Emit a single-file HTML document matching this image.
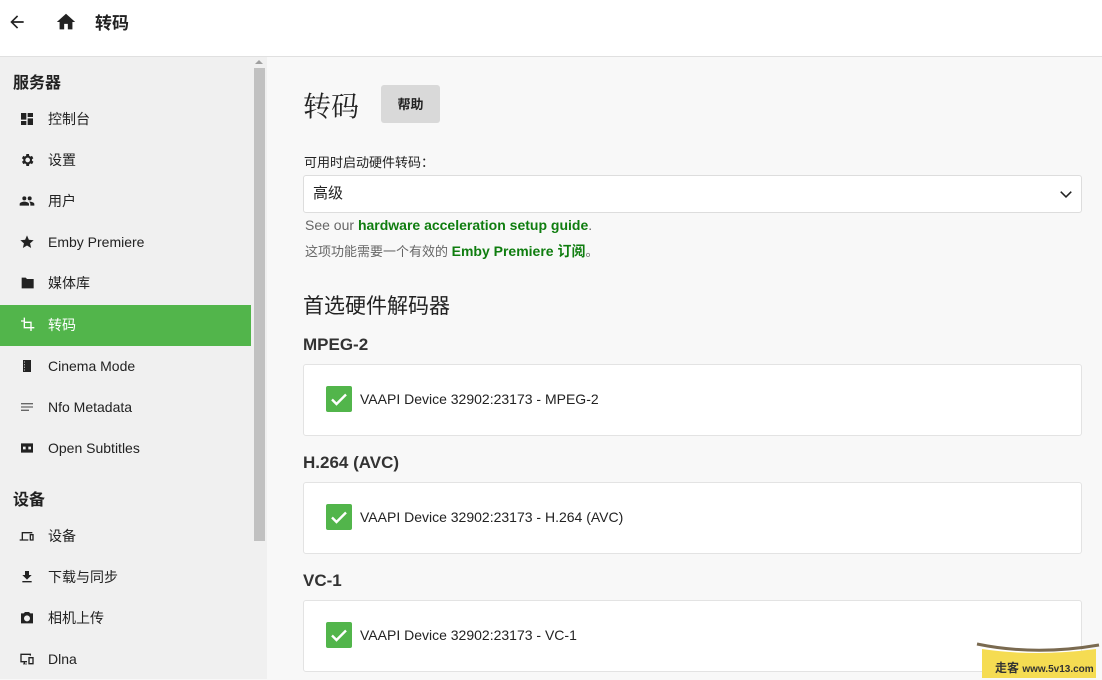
<!DOCTYPE html>
<html><head><meta charset="utf-8"><style>
*{margin:0;padding:0;box-sizing:border-box}
body{width:1102px;height:679px;overflow:hidden;background:#f8f8f8;font-family:"Liberation Sans","Noto Sans CJK SC",sans-serif;color:#222;position:relative}
.hdr{position:absolute;left:0;top:0;width:1102px;height:57px;background:#fff;border-bottom:1px solid #e0e0e0}
.side{position:absolute;left:0;top:57px;width:251px;height:622px;background:#f0f0f0}
.sb{position:absolute;left:251px;top:57px;width:16px;height:622px;background:#f0f0f0}
.thumb{position:absolute;left:254px;top:68px;width:11px;height:473px;background:#c1c1c1}
.sec{position:absolute;left:13px;font-size:16px;font-weight:bold;color:#222}
.it{position:absolute;left:0;width:251px;height:41px;font-size:14px;color:#222;line-height:41px}
.it .ic{position:absolute;left:19px;top:12px;width:16px;height:16px}
.it .t{position:absolute;left:48px}
.sel{background:#52b54b;color:#fff}
.abs{position:absolute}
.card{position:absolute;left:303px;width:779px;height:72px;background:#fff;border:1px solid #e3e3e3;border-radius:3px}
.cb{position:absolute;left:22px;top:21px;width:26px;height:26px;background:#52b54b;border-radius:2px}
.card .l{position:absolute;left:56px;top:26px;font-size:14px;color:#222}
.h3{position:absolute;left:303px;font-size:17px;font-weight:bold;color:#333}
a{color:#0f7d0f;font-weight:bold;text-decoration:none}
</style></head><body>
<div class="hdr">
<svg class="abs" style="left:7px;top:12px" width="20" height="20" viewBox="0 0 24 24"><path d="M20 11H7.8l5.6-5.6L12 4l-8 8 8 8 1.4-1.4L7.8 13H20z" fill="#222"/></svg>
<svg class="abs" style="left:55px;top:11px" width="22" height="22" viewBox="0 0 24 24"><path d="M10 20v-6h4v6h5v-8h3L12 3 2 12h3v8z" fill="#222"/></svg>
<div class="abs" style="left:95px;top:9px;font-size:17px;font-weight:bold">转码</div>
</div>
<div class="side">
<div class="sec" style="top:12px">服务器</div>
</div>
<div class="sb"><div style="position:absolute;left:4px;top:3px;width:0;height:0;border-left:4px solid transparent;border-right:4px solid transparent;border-bottom:4px solid #a0a0a0"></div></div>
<div class="thumb"></div>

<div class="it" style="top:99px"><svg class="ic" viewBox="0 0 24 24"><path d="M3 13h8V3H3zm0 8h8v-6H3zm10 0h8V11h-8zm0-18v6h8V3z" fill="#222"/></svg><span class="t">控制台</span></div>
<div class="it" style="top:140px"><svg class="ic" viewBox="0 0 24 24"><path d="M19.4 13a7.5 7.5 0 000-2l2.1-1.6-2-3.5-2.5 1a7 7 0 00-1.7-1L15 3h-4l-.4 2.9a7 7 0 00-1.7 1l-2.5-1-2 3.5L6.6 11a7.5 7.5 0 000 2l-2.1 1.6 2 3.5 2.5-1a7 7 0 001.7 1L11 21h4l.4-2.9a7 7 0 001.7-1l2.5 1 2-3.5zM13 15.5a3.5 3.5 0 110-7 3.5 3.5 0 010 7z" fill="#222"/></svg><span class="t">设置</span></div>
<div class="it" style="top:181px"><svg class="ic" viewBox="0 0 24 24"><path d="M16 11a3 3 0 100-6 3 3 0 000 6zm-8 0a3 3 0 100-6 3 3 0 000 6zm0 2c-2.3 0-7 1.2-7 3.5V19h14v-2.5C15 14.2 10.3 13 8 13zm8 0h-1c1.2.8 2 2 2 3.5V19h6v-2.5c0-2.3-4.7-3.5-7-3.5z" fill="#222"/></svg><span class="t">用户</span></div>
<div class="it" style="top:222px"><svg class="ic" viewBox="0 0 24 24"><path d="M12 17.3l6.2 3.7-1.6-7 5.4-4.7-7.2-.6L12 2 9.2 8.7 2 9.3l5.4 4.7-1.6 7z" fill="#222"/></svg><span class="t">Emby Premiere</span></div>
<div class="it" style="top:263px"><svg class="ic" viewBox="0 0 24 24"><path d="M10 4H4v16h18V6H12z" fill="#222"/></svg><span class="t">媒体库</span></div>
<div class="it sel" style="top:305px"><svg class="ic" viewBox="0 0 24 24"><path d="M7 1v4H3v2h4v10h10v4h2v-4h4v-2H9V1zm10 14h2V7H9v2h8z" fill="#fff"/></svg><span class="t">转码</span></div>
<div class="it" style="top:346px"><svg class="ic" viewBox="0 0 24 24"><path d="M6 3h12v18H6zm2 2v2h1V5zm0 4v2h1V9zm0 4v2h1v-2zm0 4v2h1v-2z" fill="#222"/></svg><span class="t">Cinema Mode</span></div>
<div class="it" style="top:387px"><svg class="ic" viewBox="0 0 24 24"><path d="M3 6h18v2H3zm0 5h18v2H3zm0 5h12v2H3z" fill="#666"/></svg><span class="t">Nfo Metadata</span></div>
<div class="it" style="top:428px"><svg class="ic" viewBox="0 0 24 24"><path d="M3 5h18v14H3zm3 5v4h4v-4zm8 0v4h4v-4z" fill="#222"/></svg><span class="t">Open Subtitles</span></div>
<div class="sec" style="top:486px">设备</div>
<div class="it" style="top:516px"><svg class="ic" viewBox="0 0 24 24"><path d="M4 6h16v2H6v9h8v2H1v-2h3zm12 3h6v10h-6zm2 2v6h2v-6z" fill="#222"/></svg><span class="t">设备</span></div>
<div class="it" style="top:557px"><svg class="ic" viewBox="0 0 24 24"><path d="M19 9h-4V3H9v6H5l7 7zM5 18v2h14v-2z" fill="#222"/></svg><span class="t">下载与同步</span></div>
<div class="it" style="top:598px"><svg class="ic" viewBox="0 0 24 24"><path d="M9 3L7 5H3v15h18V5h-4l-2-2zm3 14a4.5 4.5 0 110-9 4.5 4.5 0 010 9z" fill="#222"/></svg><span class="t">相机上传</span></div>
<div class="it" style="top:639px"><svg class="ic" viewBox="0 0 24 24"><path d="M2 4h16v3h-2V6H4v9h8v2H9v2h3v1H6v-1h1v-2H2zm12 5h8v11h-8zm2 2v7h4v-7z" fill="#222"/></svg><span class="t">Dlna</span></div>

<div class="abs" style="left:303px;top:85px;font-size:28px;font-family:'Noto Serif CJK SC',serif;color:#222">转码</div>
<div class="abs" style="left:381px;top:85px;width:59px;height:38px;background:#d9d9d9;border-radius:3px;font-size:13px;font-weight:bold;text-align:center;line-height:40px">帮助</div>
<div class="abs" style="left:304px;top:152px;font-size:13px">可用时启动硬件转码：</div>
<div class="abs" style="left:303px;top:175px;width:779px;height:38px;background:#fff;border:1px solid #ddd;border-radius:3px;font-size:15px;line-height:36px;padding-left:9px">高级
<svg style="position:absolute;right:8px;top:11px" width="14" height="14" viewBox="0 0 24 24"><path d="M3 8l9 9 9-9" stroke="#222" stroke-width="2.6" fill="none"/></svg></div>
<div class="abs" style="left:305px;top:217px;font-size:14px;color:#666">See our <a>hardware acceleration setup guide</a>.</div>
<div class="abs" style="left:305px;top:241px;font-size:13px;color:#666">这项功能需要一个有效的 <a style="font-size:14px">Emby Premiere 订阅</a>。</div>
<div class="abs" style="left:303px;top:290px;font-size:21px;color:#222">首选硬件解码器</div>

<div class="h3" style="top:335px">MPEG-2</div>
<div class="card" style="top:364px"><div class="cb"><svg width="26" height="26" viewBox="0 0 26 26"><path d="M6 13.5l4.5 4.5L20 8.5" stroke="#fff" stroke-width="2.4" fill="none"/></svg></div><span class="l">VAAPI Device 32902:23173 - MPEG-2</span></div>
<div class="h3" style="top:453px">H.264 (AVC)</div>
<div class="card" style="top:482px"><div class="cb"><svg width="26" height="26" viewBox="0 0 26 26"><path d="M6 13.5l4.5 4.5L20 8.5" stroke="#fff" stroke-width="2.4" fill="none"/></svg></div><span class="l">VAAPI Device 32902:23173 - H.264 (AVC)</span></div>
<div class="h3" style="top:571px">VC-1</div>
<div class="card" style="top:600px"><div class="cb"><svg width="26" height="26" viewBox="0 0 26 26"><path d="M6 13.5l4.5 4.5L20 8.5" stroke="#fff" stroke-width="2.4" fill="none"/></svg></div><span class="l">VAAPI Device 32902:23173 - VC-1</span></div>

<svg class="abs" style="left:975px;top:640px" width="127" height="39" viewBox="0 0 127 39"><path d="M2 4Q60 16 124 5" stroke="#7a6a50" stroke-width="3" fill="none"/><path d="M7 9Q60 17 121 9V38H7z" fill="#f5dc52"/></svg>
<div class="abs" style="left:995px;top:659px;font-size:12px;font-weight:bold;color:#333">走客 <span style="font-size:10px">www.5v13.com</span></div>
</body></html>
